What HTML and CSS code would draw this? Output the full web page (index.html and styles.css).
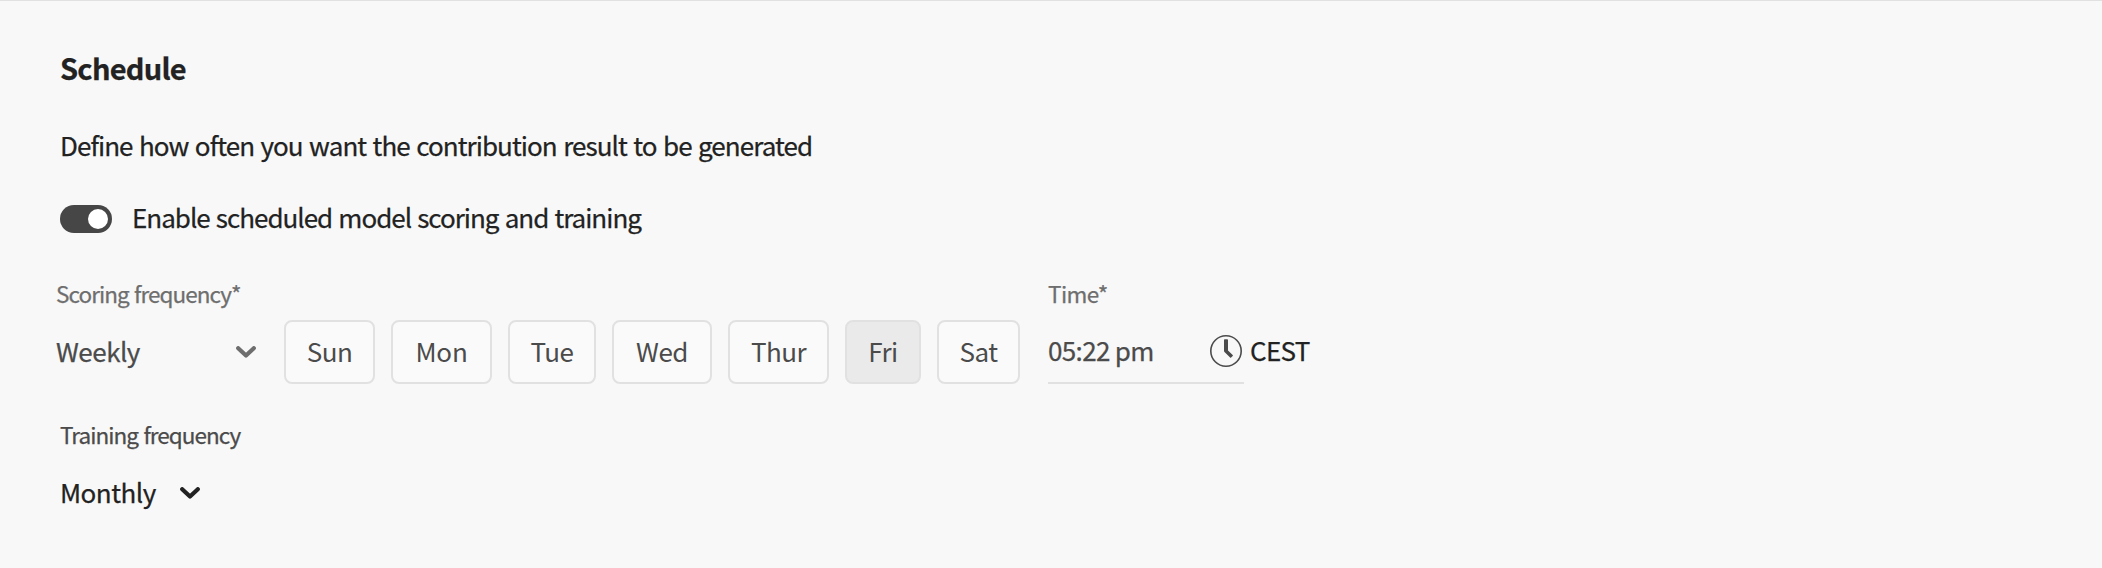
FILE: index.html
```html
<!DOCTYPE html>
<html lang="en">
<head>
<meta charset="utf-8">
<title>Schedule</title>
<link rel="stylesheet" href="styles.css">
</head>
<body>
<main class="panel">
  <h2 class="title">Schedule</h2>
  <p class="intro">Define how often you want the contribution result to be generated</p>
  <div class="toggle-row">
    <div class="switch"><div class="knob"></div></div>
    <span class="toggle-label">Enable scheduled model scoring and training</span>
  </div>
  <div class="schedule">
    <div class="frequency">
      <label class="label">Scoring frequency*</label>
      <div class="controls">
        <div class="select"><span class="weekly">Weekly</span>
          <svg class="chevron" viewBox="0 0 20 12"><path d="M2.2 2.2L10 9.6l7.8-7.4"/></svg>
        </div>
        <div class="days">
          <button class="day sun">Sun</button>
          <button class="day mon">Mon</button>
          <button class="day tue">Tue</button>
          <button class="day wed">Wed</button>
          <button class="day thur">Thur</button>
          <button class="day fri selected">Fri</button>
          <button class="day sat">Sat</button>
        </div>
      </div>
    </div>
    <div class="time">
      <label class="label time-label">Time*</label>
      <div class="time-row">
        <div class="time-field"><span class="value">05:22 pm</span>
          <svg class="clock" viewBox="0 0 32 32"><circle cx="16" cy="16" r="15.2"/><path d="M14 5q0-.8.8-.8h2.4q.8 0 .8.8v10.4l4.7 4.5q.5.5 0 1l-1.6 1.6q-.5.5-1 0L14.500 17q-.5-.5-.5-1.200z"/></svg>
        </div>
        <span class="zone">CEST</span>
      </div>
    </div>
  </div>
  <div class="training">
    <label class="training-label">Training frequency</label>
    <div class="training-select"><span class="monthly">Monthly</span>
      <svg class="chevron" viewBox="0 0 20 12"><path d="M2.2 2.2L10 9.6l7.8-7.4"/></svg>
    </div>
  </div>
</main>
</body>
</html>
```

FILE: styles.css
```css
* { box-sizing: border-box; }
body {
  margin: 0;
  background: #f8f8f8;
  color: #222;
  font: 26px/40px "Noto Sans CJK SC", "Noto Sans", sans-serif;
  letter-spacing: -0.5px;
  -webkit-text-stroke: 0.25px;
}
.panel {
  height: 568px;
  padding: 46px 56px 0;
  border-top: 1px solid #e1e1e1;
}
.title { margin: 0; padding-left: 4px; font-size: 29px; font-weight: 700; line-height: 40px; letter-spacing: -0.75px; }
.intro { margin: 38px 0 0; padding-left: 4px; letter-spacing: -0.93px; word-spacing: 1.5px; }
.toggle-row { display: flex; align-items: center; gap: 20px; height: 40px; margin-top: 34px; padding-left: 4px; }
.toggle-label { margin-bottom: 4px; letter-spacing: -1px; word-spacing: 1.3px; }
.switch { width: 52px; height: 28px; padding: 4px; border-radius: 14px; background: #464646; display: flex; justify-content: flex-end; }
.knob { width: 20px; height: 20px; border-radius: 50%; background: #fff; }
.schedule { display: flex; margin-top: 39px; color: #4b4b4b; }
.label { display: block; height: 42px; font-size: 22.5px; line-height: 30px; color: #6e6e6e; letter-spacing: -0.95px; word-spacing: 1.3px; }
.time-label { letter-spacing: -0.6px; }
.controls { display: flex; }
.select { display: flex; align-items: center; justify-content: space-between; width: 200px; height: 64px; }
.weekly, .monthly { margin-bottom: 2px; }
.chevron { width: 20px; height: 12px; fill: none; stroke: #6e6e6e; stroke-width: 4.2; stroke-linecap: round; stroke-linejoin: round; }
.days { display: flex; gap: 16px; margin-left: 28px; }
.day {
  height: 64px; padding: 0 0 2px; border: 2px solid #e1e1e1; border-radius: 8px;
  background: #fafafa; color: #4b4b4b; font: inherit; line-height: 58px;
  letter-spacing: -0.5px; -webkit-text-stroke: 0;
}
.selected { background: #eaeaea; }
.sun { width: 91px; }
.mon { width: 101px; letter-spacing: -0.2px; }
.tue { width: 88px; }
.wed { width: 100px; }
.thur { width: 101px; }
.fri { width: 76px; }
.sat { width: 83px; }
.time { margin-left: 28px; }
.time-row { display: flex; }
.time-field { display: flex; align-items: center; justify-content: space-between; width: 196px; height: 64px; padding-right: 2px; border-bottom: 2px solid #e1e1e1; }
.value { margin-bottom: 3px; letter-spacing: -0.65px; }
.clock { width: 32px; height: 32px; fill: none; stroke: #4b4b4b; stroke-width: 1.6; }
.clock path { fill: #4b4b4b; stroke: none; }
.zone { margin-left: 6px; line-height: 59px; color: #222; letter-spacing: -0.7px; }
.training { margin-top: 35px; padding-left: 4px; }
.training-label { display: block; font-size: 22.5px; line-height: 30px; color: #4b4b4b; letter-spacing: -0.95px; word-spacing: 1.3px; }
.training-select { display: flex; align-items: center; height: 64px; margin-top: 12px; gap: 24px; }
.training-select .chevron { stroke: #222; }
```
